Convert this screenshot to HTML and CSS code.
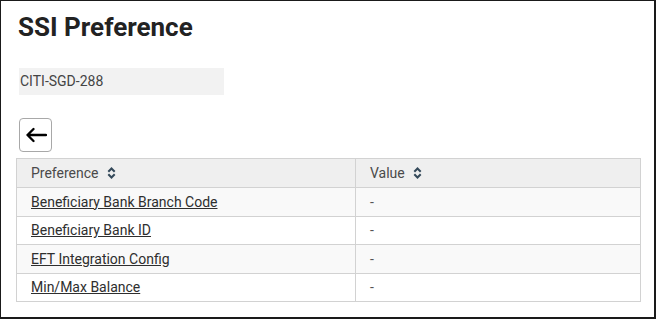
FILE: index.html
```html
<!DOCTYPE html>
<html>
<head>
<meta charset="utf-8">
<link rel="stylesheet" href="styles.css">
</head>
<body>
<div class="frame">
  <h1 class="title">SSI Preference</h1>
  <div class="field">CITI-SGD-288</div>
  <button class="back" aria-label="Back">
    <svg width="22" height="16" viewBox="0 0 22 16"><path d="M21 8H2.5M8.5 2L2.5 8l6 6" fill="none" stroke="#000" stroke-width="2.3" stroke-linecap="round" stroke-linejoin="round"/></svg>
  </button>
  <table class="grid">
    <thead>
      <tr>
        <th class="c1">Preference <span class="sort"><svg width="9" height="12" viewBox="0 0 9 12"><path d="M1.3 4.8L4.5 1.5l3.2 3.3M1.3 7.2l3.2 3.3 3.2-3.3" fill="none" stroke="#34495a" stroke-width="2"/></svg></span></th>
        <th class="c2">Value <span class="sort"><svg width="9" height="12" viewBox="0 0 9 12"><path d="M1.3 4.8L4.5 1.5l3.2 3.3M1.3 7.2l3.2 3.3 3.2-3.3" fill="none" stroke="#34495a" stroke-width="2"/></svg></span></th>
      </tr>
    </thead>
    <tbody>
      <tr class="odd"><td><a href="#">Beneficiary Bank Branch Code</a></td><td class="val">-</td></tr>
      <tr><td><a href="#">Beneficiary Bank ID</a></td><td class="val">-</td></tr>
      <tr class="odd"><td><a href="#">EFT Integration Config</a></td><td class="val">-</td></tr>
      <tr><td><a href="#">Min/Max Balance</a></td><td class="val">-</td></tr>
    </tbody>
  </table>
</div>
</body>
</html>
```
FILE: styles.css
```css
html, body { margin: 0; padding: 0; background: #fff; }
body { font-family: Roboto, "Liberation Sans", sans-serif; }
.frame {
  box-sizing: border-box;
  width: 656px;
  height: 319px;
  border-style: solid;
  border-color: #1a1a1a;
  border-width: 1px 2px 2px 1px;
  padding: 0 15px 0 15px;
}
.title {
  margin: 0;
  padding-top: 11px;
  padding-left: 2px;
  font-size: 26px;
  line-height: 30px;
  font-weight: 700;
  color: #222;
}
.field {
  margin: 26px 0 0 3px;
  width: 205px;
  height: 27px;
  box-sizing: border-box;
  background: #f2f2f2;
  color: #444;
  font-size: 14px;
  line-height: 27px;
  padding-left: 1px;
}
.back {
  display: flex;
  align-items: center;
  justify-content: center;
  margin: 23px 0 0 3px;
  width: 33px;
  height: 34px;
  box-sizing: border-box;
  padding: 0;
  background: #fff;
  border: 1px solid #a8a8a8;
  border-radius: 4px;
}
.grid {
  margin-top: 6px;
  width: 625px;
  border-collapse: collapse;
  font-size: 14px;
  color: #333;
}
.grid th, .grid td {
  border: 1px solid #d2d2d2;
  height: 28.5px;
  padding: 0 0 0 14px;
  text-align: left;
  box-sizing: border-box;
}
.grid th {
  background: #efefef;
  font-weight: 400;
  color: #4a4a4a;
  height: 29px;
}
.grid th.c1 { width: 339px; }
.sort { display: inline-block; margin-left: 5px; vertical-align: -1px; }
.grid tr.odd td { background: #f9f9f9; }
.grid a { color: #2e2e2e; text-decoration: underline; }
.val { color: #555; }
```
